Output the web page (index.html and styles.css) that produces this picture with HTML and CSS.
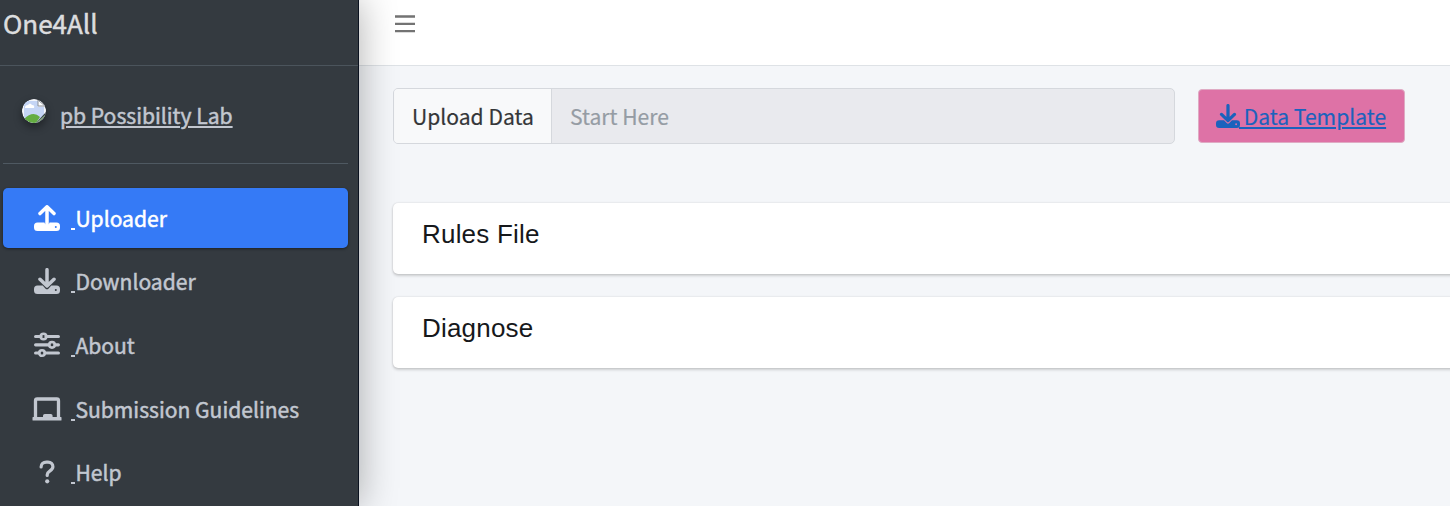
FILE: index.html
```html
<!DOCTYPE html>
<html lang="en">
<head>
<meta charset="utf-8">
<title>One4All</title>
<link rel="stylesheet" href="styles.css">
</head>
<body>
<svg class="defs" width="0" height="0" aria-hidden="true">
  <symbol id="upload" viewBox="0 0 26 26">
    <path d="M13 19V2M6 8.6L13 1.8L20 8.6" fill="none" stroke="currentColor" stroke-width="3.5" stroke-linecap="round" stroke-linejoin="round"/>
    <path fill="currentColor" fill-rule="evenodd" d="M3.5 17.6H10.5C11 20.4 15 20.4 15.5 17.6H22.5A3.5 3.5 0 0 1 26 21.1V22.5A3.5 3.5 0 0 1 22.5 26H3.5A3.5 3.5 0 0 1 0 22.5V21.1A3.5 3.5 0 0 1 3.5 17.6ZM21.8 20.9A1 1 0 1 0 21.8 22.9A1 1 0 1 0 21.8 20.9Z"/>
  </symbol>
  <symbol id="download" viewBox="0 0 26 26">
    <path d="M13 1.7V17.5M6 11.3L13 18L20 11.3" fill="none" stroke="currentColor" stroke-width="3.5" stroke-linecap="round" stroke-linejoin="round"/>
    <path fill="currentColor" fill-rule="evenodd" d="M3.5 17.6H8.7L11.6 20.7Q13 21.9 14.4 20.7L17.3 17.6H22.5A3.5 3.5 0 0 1 26 21.1V22.5A3.5 3.5 0 0 1 22.5 26H3.5A3.5 3.5 0 0 1 0 22.5V21.1A3.5 3.5 0 0 1 3.5 17.6ZM21.8 20.9A1 1 0 1 0 21.8 22.9A1 1 0 1 0 21.8 20.9Z"/>
  </symbol>
  <symbol id="sliders" viewBox="0 0 26 26">
    <g fill="none" stroke="currentColor" stroke-linecap="round">
      <path stroke-width="3.2" d="M1.6 4.5H7M12 4.5H24.4M1.6 12.8H15M21 12.8H24.4M1.6 21H5M11 21H24.4"/>
      <g stroke-width="2.6"><circle cx="9.5" cy="4.5" r="2.8"/><circle cx="18" cy="12.8" r="2.8"/><circle cx="8" cy="21" r="2.8"/></g>
    </g>
  </symbol>
  <symbol id="laptop" viewBox="0 0 30 24">
    <path d="M3.5 20V3.7Q3.5 2 5.2 2H24.8Q26.5 2 26.5 3.7V20" fill="none" stroke="currentColor" stroke-width="3.3"/>
    <path fill="currentColor" d="M1 20H11V18.8Q11 17 12.8 17H18.8Q20.6 17 20.6 18.8V20H29Q29.5 20 29.5 20.5V23Q29.5 23.6 29 23.6H1Q.5 23.6 .5 23V20.5Q.5 20 1 20Z"/>
  </symbol>
  <symbol id="question" viewBox="0 0 16 24">
    <path d="M2.1 7C2.1 3.8 4.2 2.2 7.4 2.2H9C12 2.2 13.9 4.1 13.9 6.8C13.9 11 8.2 10.8 8.2 14.8V15.4" fill="none" stroke="currentColor" stroke-width="3.2" stroke-linecap="round"/>
    <circle cx="8.2" cy="21.3" r="2.1" fill="currentColor"/>
  </symbol>
</svg>
<div class="app">
  <aside class="sidebar">
    <div class="brand">One4All</div>
    <div class="user">
      <svg class="avatar" viewBox="0 0 24 24">
        <defs><clipPath id="round"><circle cx="12" cy="12" r="12"/></clipPath></defs>
        <g clip-path="url(#round)">
          <path fill="#f4f6fa" d="M0 0H24V24H0Z"/>
          <path fill="#c5d5f5" d="M2 2H16V8H22V24H2Z"/>
          <path fill="#fff" d="M3 9Q3 6 6 6Q8 3 10 6Q13 6 12 9Z"/>
          <path fill="#65ad42" d="M2 20Q11 11 18 18L14 24H2Z"/>
          <path fill="#fff" stroke="#8b9098" d="M16 1V7H23Z"/>
          <path fill="#343a40" d="M13 25L25 12V25Z"/>
          <path stroke="#88a684" stroke-width="1.6" d="M15 24L24 16"/>
        </g>
      </svg>
      <a class="user-name">pb Possibility Lab</a>
    </div>
    <nav class="nav">
      <a class="item active"><svg class="icon"><use href="#upload"/></svg><u class="gap">&nbsp;</u><span class="label">Uploader</span></a>
      <a class="item"><svg class="icon"><use href="#download"/></svg><u class="gap">&nbsp;</u><span class="label">Downloader</span></a>
      <a class="item"><svg class="icon"><use href="#sliders"/></svg><u class="gap">&nbsp;</u><span class="label">About</span></a>
      <a class="item"><svg class="icon laptop"><use href="#laptop"/></svg><u class="gap">&nbsp;</u><span class="label">Submission Guidelines</span></a>
      <a class="item"><svg class="icon question"><use href="#question"/></svg><u class="gap">&nbsp;</u><span class="label">Help</span></a>
    </nav>
  </aside>
  <div class="page">
    <header class="topbar"><svg class="menu" viewBox="0 0 20 18"><path stroke="#737373" stroke-width="2.3" d="M0 1.5H20M0 8.8H20M0 16.2H20"/></svg></header>
    <main class="content">
      <div class="controls">
        <div class="file"><span class="file-button">Upload Data</span><span class="file-text">Start Here</span></div>
        <a class="template"><svg class="template-icon"><use href="#download"/></svg><span class="template-label">&nbsp;Data Template</span></a>
      </div>
      <section class="card">Rules File</section>
      <section class="card">Diagnose</section>
    </main>
  </div>
</div>
</body>
</html>
```
FILE: styles.css
```css
* { box-sizing: border-box; }
body {
  margin: 0;
  overflow: hidden;
  background: #f4f6f9;
  font-family: "Noto Sans CJK SC", "Noto Sans", sans-serif;
  font-size: 21.1px;
  line-height: 32px;
}
.defs { display: block; }
.app { display: flex; height: 506px; }
.sidebar {
  position: relative;
  z-index: 1;
  flex: 0 0 359px;
  background: #343a40;
  border-right: 1px solid #0b1220;
  box-shadow: 0 0 36px rgba(0, 0, 0, .32);
  color: #c2c7d0;
}
.brand {
  height: 66px;
  padding: 7px 0 0 3px;
  border-bottom: 1px solid #4b545c;
  color: #dcdddf;
  font-size: 26px;
  -webkit-text-stroke: .5px;
}
.user {
  display: flex;
  height: 98px;
  margin: 0 10px 0 3px;
  padding: 33px 0 0 19px;
  border-bottom: 1px solid #4f5962;
  -webkit-text-stroke: .5px;
}
.avatar {
  width: 24px;
  height: 24px;
  margin-right: 14px;
  border-radius: 50%;
  box-shadow: 0 4px 8px rgba(0, 0, 0, .4);
}
.user-name { text-decoration: underline 1.5px; text-underline-offset: 2px; }
.nav { padding: 24px 10px 0 3px; }
.item {
  display: flex;
  align-items: center;
  height: 60px;
  margin-bottom: 3.7px;
  padding: 0 0 1px 31px;
  border-radius: 5px;
  -webkit-text-stroke: .5px;
}
.active {
  background: #357af6;
  color: #fff;
  box-shadow: 0 1px 3px rgba(0, 0, 0, .45);
}
.icon { width: 26px; height: 26px; margin-right: 11px; }
.icon.laptop { width: 30px; height: 24px; margin: 0 9px 0 -2px; }
.icon.question { width: 16px; height: 24px; margin: 0 16px 0 5px; }
.gap { width: 4.4px; overflow: hidden; text-decoration-thickness: 1.5px; text-underline-offset: 1px; }
.page { flex: 1; min-width: 0; }
.topbar {
  height: 66px;
  padding: 15px 0 0 36px;
  background: #fff;
  border-bottom: 1px solid #dee2e6;
}
.menu { display: block; width: 20px; height: 18px; }
.content { padding: 22px 0 0 34px; }
.controls { display: flex; align-items: center; margin-bottom: 59px; }
.file {
  display: flex;
  width: 782px;
  height: 56px;
  border: 1px solid #d5d8dd;
  border-radius: 5px;
  overflow: hidden;
  background: #e9eaee;
  line-height: 55px;
  -webkit-text-stroke: .2px;
}
.file-button {
  width: 158px;
  padding-left: 18px;
  background: #f8f9fa;
  border-right: 1px solid #d5d8dd;
  color: #343638;
}
.file-text { padding-left: 18px; color: #959ca4; }
.template {
  display: flex;
  align-items: center;
  width: 207px;
  height: 54px;
  margin-left: 23px;
  padding-left: 17px;
  border: 1px solid #dfabc4;
  border-radius: 4px;
  background: #de72a6;
  color: #1b62bd;
  -webkit-text-stroke: .2px;
}
.template-icon { width: 24px; height: 24px; }
.template-label { margin-left: -1px; text-decoration: underline 1.5px; text-underline-offset: 2px; }
.card {
  height: 71px;
  margin: 0 -10px 23px 0;
  padding: 15px 29px;
  border-radius: 5px;
  background: #fff;
  box-shadow: 0 0 2px rgba(0, 0, 0, .16), 0 2px 3px rgba(0, 0, 0, .16);
  color: #16181b;
  font-family: "Liberation Sans", Arial, sans-serif;
  font-size: 26px;
  letter-spacing: .2px;
}
```
